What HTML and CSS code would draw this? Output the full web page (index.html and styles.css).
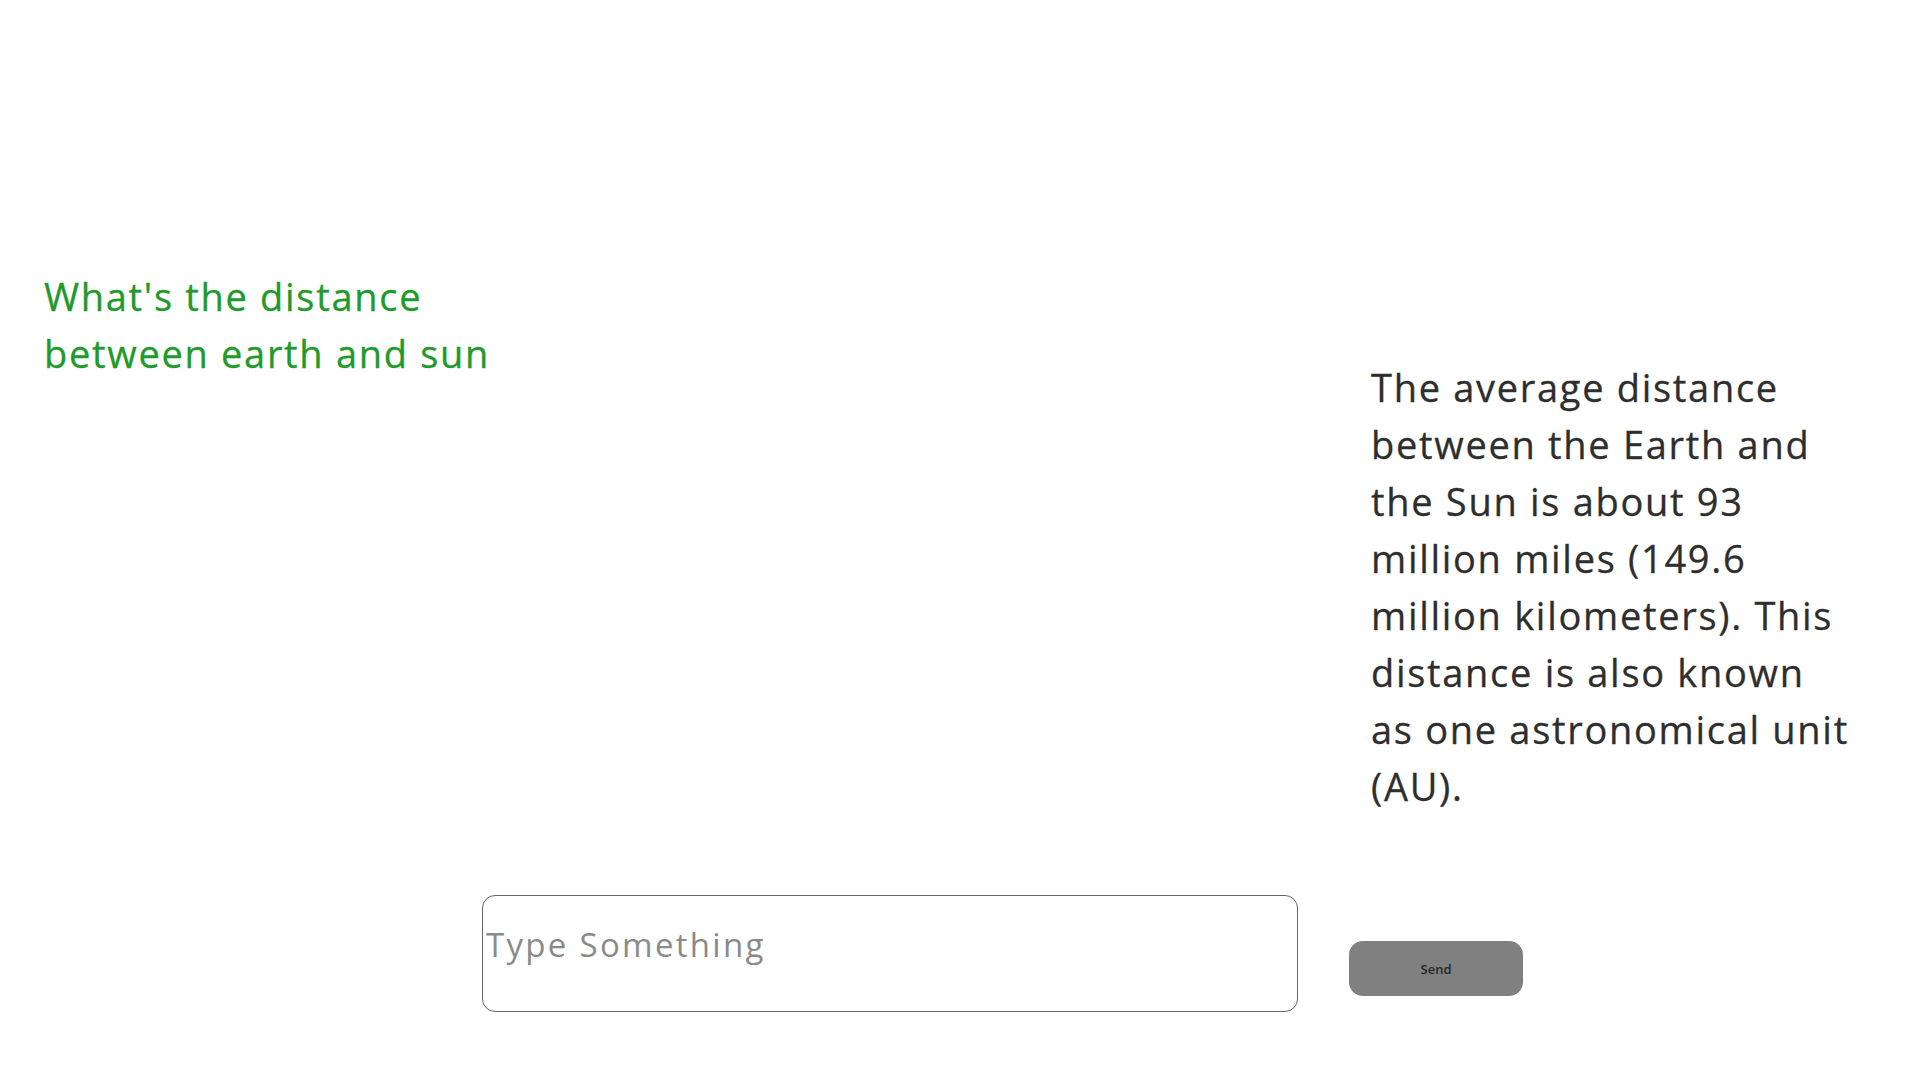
FILE: index.html
```html
<!DOCTYPE html>
<html lang="en">
<head>
<meta charset="utf-8">
<title>Chat</title>
<link rel="stylesheet" href="styles.css">
</head>
<body>
<main class="chat">
  <section class="messages">
    <p class="msg msg-user">What's the distance<br>between earth and sun</p>
    <p class="msg msg-bot">The average distance<br>between the Earth and<br>the Sun is about 93<br>million miles (149.6<br>million kilometers). This<br>distance is also known<br>as one astronomical unit<br>(AU).</p>
  </section>
  <form class="composer">
    <input class="composer-input" type="text" placeholder="Type Something">
    <button class="composer-send" type="button">Send</button>
  </form>
</main>
</body>
</html>
```

FILE: styles.css
```css
* { box-sizing: border-box; }

html, body {
  margin: 0;
  padding: 0;
  background: #ffffff;
}

body {
  font-family: "Open Sans", "Liberation Sans", sans-serif;
  width: 1920px;
  height: 1079px;
  overflow: hidden;
}

.chat {
  display: flex;
  flex-direction: column;
}

.messages {
  display: flex;
  justify-content: space-between;
  align-items: flex-start;
  padding: 0 40px 0 44px;
}

.msg {
  margin: 0;
  font-size: 38px;
  line-height: 57px;
  font-weight: 500;
  letter-spacing: 1.7px;
  white-space: nowrap;
  -webkit-text-stroke: 0.3px currentColor;
}

.msg-user {
  color: #209a2b;
  margin-top: 268px;
}

.msg-bot {
  color: #2e2e2e;
  margin-top: 359px;
  width: 509px;
}

.composer {
  display: flex;
  align-items: flex-start;
  margin: 80px 0 0 0;
  padding-left: 482px;
}

.composer-input {
  width: 816px;
  height: 117px;
  border: 1.5px solid #666666;
  border-radius: 13px;
  padding: 0 0 18px 3px;
  font-family: "Open Sans", "Liberation Sans", sans-serif;
  font-size: 33px;
  letter-spacing: 2.3px;
  color: #333333;
  background: #ffffff;
  outline: none;
}

.composer-input::placeholder {
  color: #8a8a8a;
}

.composer-send {
  margin: 46px 0 0 51px;
  width: 174px;
  height: 55px;
  border: none;
  border-radius: 14px;
  background: #808080;
  color: #262626;
  font-family: "Open Sans", "Liberation Sans", sans-serif;
  font-size: 13px;
  font-weight: 600;
  cursor: pointer;
}
```
